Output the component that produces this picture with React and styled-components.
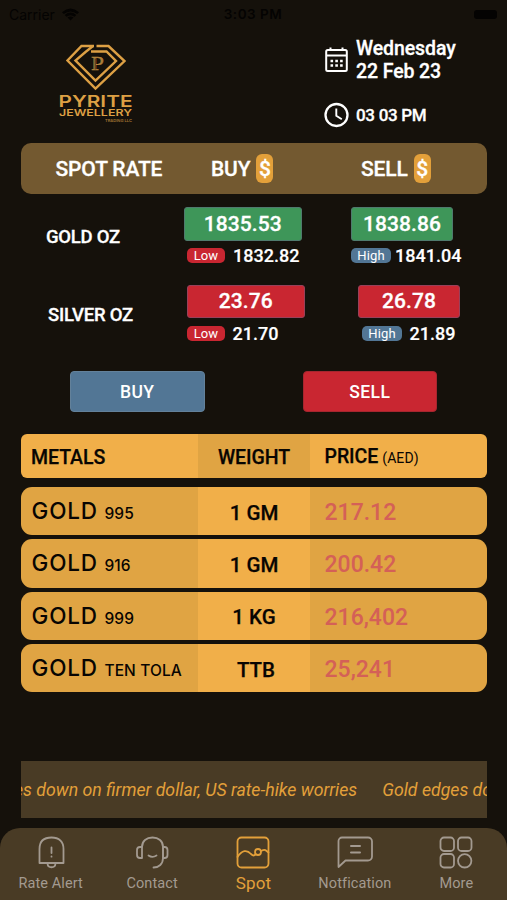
import React from 'react';
import styled, { createGlobalStyle, css } from 'styled-components';

const GlobalStyle = createGlobalStyle`
  :root {
    --background: #15110b;
    --panel: #735930;
    --bar: #493b25;
    --gold: #f1af49;
    --gold-dark: #e0a443;
    --accent: #e3a03a;
    --green: #3e9659;
    --red: #c92631;
    --blue: #527695;
    --muted: #a39a90;
  }

  * {
    box-sizing: border-box;
  }

  body {
    margin: 0;
    background: var(--background);
    font-family: Roboto, sans-serif;
  }

  svg {
    display: block;
  }
`;

const Screen = styled.main`
  width: 507px;
  height: 900px;
  display: flex;
  flex-direction: column;
  overflow: hidden;
  color: #fff;
  background: var(--background);
`;

const StatusBar = styled.div`
  height: 28px;
  padding: 0 10px 0 9px;
  display: grid;
  grid-template-columns: 1fr auto 1fr;
  align-items: center;
  color: #040302;
  font: 400 14px Inter, sans-serif;

  strong {
    font-weight: 600;
    font-size: 13.5px;
    letter-spacing: 0.5px;
  }
`;

const Carrier = styled.div`
  display: flex;
  align-items: center;
  gap: 7px;
`;

const Battery = styled.span`
  width: 23px;
  height: 9px;
  justify-self: end;
  border-radius: 3px;
  background: #040302;
`;

const Header = styled.header`
  height: 115px;
  padding: 9px 0 0 56px;
  display: flex;
`;

const LogoBox = styled.div`
  width: 268px;
  padding-top: 5px;
`;

const DateTime = styled.div`
  display: flex;
  flex-direction: column;
  font-weight: 500;
  -webkit-text-stroke: 0.3px currentColor;
`;

const DateRow = styled.div`
  height: 46px;
  display: flex;
  align-items: center;
  gap: 7px;
  font-size: 19.5px;
  line-height: 23px;
  letter-spacing: -0.1px;
`;

const TimeRow = styled(DateRow)`
  height: 26px;
  margin-top: 19px;
  font-size: 17px;
  letter-spacing: -0.3px;
`;

const SpotHeader = styled.div`
  height: 51px;
  margin: 0 20px 0 21px;
  padding-left: 34.5px;
  display: grid;
  grid-template-columns: 155.5px 150px 1fr;
  align-items: center;
  border-radius: 10px;
  background: var(--panel);
  font-size: 21px;
  font-weight: 500;
  letter-spacing: -0.15px;
  -webkit-text-stroke: 0.3px currentColor;
`;

const SpotTitle = styled.span`
  display: flex;
  align-items: center;
  gap: 6px;
`;

const Currency = styled.span`
  width: 17px;
  height: 29px;
  display: flex;
  align-items: center;
  justify-content: center;
  border-radius: 6px;
  background: var(--accent);
`;

const SpotRow = styled.section`
  height: 77.5px;
  padding-top: 13px;
  padding-left: ${({ $metal }) => ($metal === 'gold' ? '46px' : '48px')};
  display: grid;
  grid-template-columns: ${({ $metal }) =>
    $metal === 'gold' ? '138px 167px 111px' : '139px 171px 101px'};
`;

const MetalName = styled.h2`
  margin: 0;
  padding-top: 20px;
  font-size: 18.5px;
  line-height: 20px;
  font-weight: 500;
  letter-spacing: -0.25px;
  -webkit-text-stroke: 0.3px currentColor;
`;

const Rate = styled.div`
  width: ${({ $wide }) => ($wide ? '117.5px' : '102px')};
  height: 33.5px;
  border-radius: 3px;
  display: flex;
  align-items: center;
  justify-content: center;
  background: ${({ $up }) => ($up ? 'var(--green)' : 'var(--red)')};
  border: 1px solid ${({ $up }) => ($up ? '#4f7a6d' : '#98405a')};
  font-size: 21px;
  font-weight: 500;
  letter-spacing: 0.1px;
  -webkit-text-stroke: 0.3px currentColor;
`;

const Range = styled.div`
  height: 15px;
  margin-top: 7.5px;
  padding-left: ${({ $indent }) => $indent || 0}px;
  display: flex;
  align-items: center;
  gap: ${({ $gap }) => $gap}px;
  font-size: 18px;
  font-weight: 500;
  white-space: nowrap;
  -webkit-text-stroke: 0.2px currentColor;
`;

const RangeBadge = styled.span`
  width: ${({ $high }) => ($high ? 40 : 38)}px;
  height: 15px;
  border-radius: 5px;
  background: ${({ $high }) => ($high ? 'var(--blue)' : 'var(--red)')};
  font-size: 13px;
  line-height: 16px;
  font-weight: 400;
  letter-spacing: 0.1px;
  text-align: center;
  -webkit-text-stroke: 0;
`;

const Actions = styled.div`
  height: 85px;
  padding: 22px 70px 0;
  display: flex;
  justify-content: space-between;
`;

const TradeButton = styled.button`
  width: 134.5px;
  height: 41px;
  padding: 1px 0 0;
  border: 1px solid ${({ $sell }) => ($sell ? '#a5262f' : '#63819a')};
  border-radius: 4px;
  color: #fff;
  background: ${({ $sell }) => ($sell ? 'var(--red)' : 'var(--blue)')};
  font: 500 17.5px Roboto, sans-serif;
  letter-spacing: 0.4px;
`;

const Prices = styled.section`
  padding: 0 20px 0 21px;
  display: flex;
  flex-direction: column;
  gap: 4px;
  color: #080502;
`;

const rowGrid = css`
  display: grid;
  grid-template-columns: 177px 112px 1fr;
  overflow: hidden;
  font-weight: 500;

  > div {
    display: flex;
    align-items: center;
  }
`;

const PriceHeader = styled.div`
  ${rowGrid}
  height: 44px;
  margin-bottom: 5px;
  border-radius: 6px;
  background: var(--gold);
  font-size: 19.5px;
  letter-spacing: -0.05px;
  -webkit-text-stroke: 0.25px currentColor;

  > div:first-child {
    padding-left: 10px;
  }

  > div:nth-child(2) {
    justify-content: center;
    background: var(--gold-dark);
  }

  > div:last-child {
    padding-left: 14.5px;
    align-items: baseline;
    line-height: 45px;
    gap: 4px;
  }

  small {
    font-size: 14px;
    font-weight: 400;
    letter-spacing: 0.1px;
    -webkit-text-stroke: 0;
  }
`;

const PriceRow = styled.div`
  ${rowGrid}
  height: 48.35px;
  border-radius: 11px;
  background: var(--gold-dark);
`;

const Metal = styled.div`
  padding-left: 10.5px;
  font-family: Inter, sans-serif;
  font-size: 22.5px;
  letter-spacing: 0.85px;

  && {
    align-items: baseline;
    line-height: 48px;
    gap: 6.5px;
  }

  small {
    font-size: 15.5px;
    letter-spacing: 0.1px;
  }
`;

const Weight = styled.div`
  justify-content: center;
  padding-left: ${({ $shift }) => $shift || 0}px;
  background: var(--gold);
  font-size: 20.5px;
  -webkit-text-stroke: 0.25px currentColor;
`;

const Price = styled.div`
  padding-left: 14.5px;
  color: #d46057;
  font-size: 23px;
`;

const Ticker = styled.div`
  height: 57px;
  margin: auto 20px 10px 21px;
  display: flex;
  align-items: center;
  overflow: hidden;
  color: var(--accent);
  background: var(--bar);
  font-size: 17.7px;
  font-style: italic;
  white-space: nowrap;

  span {
    margin: 0 25px 0 -7px;
  }

  span + span {
    margin: 0;
  }
`;

const TabBar = styled.nav`
  height: 72px;
  display: grid;
  grid-template-columns: repeat(5, 1fr);
  border-radius: 20px 20px 0 0;
  background: var(--bar);
`;

const Tab = styled.div`
  padding-top: 7px;
  display: flex;
  flex-direction: column;
  align-items: center;
  gap: ${({ $active }) => ($active ? 3 : 4)}px;
  color: ${({ $active }) => ($active ? 'var(--accent)' : 'var(--muted)')};
  font-size: ${({ $active }) => ($active ? 17 : 14.5)}px;
  line-height: 20px;
  letter-spacing: 0.1px;
  white-space: nowrap;
`;

const Logo = () => (
  <svg width="80" height="84" viewBox="56 42 80 84" fill="none" stroke="#dda044">
    <path d="M94 46H81.500L67.500 60.500L95.500 88.500L124.500 61L108.500 46H96.500" strokeWidth="2.400" />
    <path d="M93 46L85.500 52L75.500 60.500L95.500 80.500L116 61L106.500 51.500H91" strokeWidth="2.400" />
    <text x="91" y="70" fill="#a77c3a" stroke="#c18e40" strokeWidth=".3" fontFamily="Liberation Serif, serif" fontSize="19" textLength="13" lengthAdjust="spacingAndGlyphs">
      P
    </text>
    <path d="M95.200 58.500v11" stroke="#15110b" strokeWidth=".7" />
    <g fill="#dda044" fontFamily="Inter, sans-serif" stroke="none">
      <text x="58.500" y="107" fontSize="16.500" fontWeight="600" textLength="74" lengthAdjust="spacingAndGlyphs">
        PYRITE
      </text>
      <text x="59" y="116" fontSize="9" fontWeight="600" textLength="73" lengthAdjust="spacingAndGlyphs">
        JEWELLERY
      </text>
      <text x="105" y="121.500" fontSize="4" fontWeight="600" textLength="27" lengthAdjust="spacingAndGlyphs" opacity=".7">
        TRADING LLC
      </text>
    </g>
  </svg>
);

const WifiIcon = () => (
  <svg width="17" height="13" viewBox="0 0 17 13" fill="currentColor">
    <path d="M0 4.200Q8.500-3 17 4.200L15.200 6Q8.500.8 1.800 6Z" />
    <path d="M2.700 7Q8.500 2.200 14.300 7L12.500 8.700Q8.500 5.600 4.500 8.700Z" />
    <path d="M5.500 9.600Q8.500 7.300 11.500 9.600L8.500 12.500Z" />
  </svg>
);

const CalendarIcon = () => (
  <svg width="25" height="29" viewBox="0 0 25 29" fill="none" stroke="currentColor" strokeWidth="2">
    <rect x="2.200" y="4" width="20.600" height="21" rx="1.500" />
    <path d="M2 9.500h21M6.500 1.500V5M18.500 1.500V5" />
    <path d="M6.500 15h2.600m2.200 0h2.600m2.200 0h2.600M6.500 19.500h2.600m2.200 0h2.600m2.200 0h2.600" strokeWidth="2.500" />
  </svg>
);

const ClockIcon = () => (
  <svg width="25" height="26" viewBox="0 0 25 26" fill="none" stroke="currentColor" strokeWidth="2.300">
    <circle cx="12.500" cy="13" r="11" />
    <path d="M12.300 6.500v7.300l5.500 3.500" strokeWidth="1.900" />
  </svg>
);

const TabIcon = ({ children }) => (
  <svg
    width="36"
    height="35"
    viewBox="0 0 36 35"
    fill="none"
    stroke="currentColor"
    strokeWidth="1.800"
    strokeLinecap="round"
    strokeLinejoin="round">
    {children}
  </svg>
);

const BellIcon = () => (
  <TabIcon>
    <path d="M6.500 28V14C6.500 6.500 11 2.500 18.500 2.500S30.500 6.500 30.500 14v14Z" />
    <path d="M14.500 28.500c.3 5 7.700 5 8 0" />
    <path d="M18.500 12.500v5.500m0 3.500v.2" />
  </TabIcon>
);

const HeadsetIcon = () => (
  <TabIcon>
    <path d="M8 12C8 6 12.500 2.500 18.500 2.500S29 6 29 12v11c0 6-4 9.500-9.500 9.500" />
    <path d="M8 12H6q-3 0-3 3v5q0 3 3 3h2ZM29 12h1.500q3 0 3 3v5q0 3-3 3H29Z" />
    <path d="M14.500 20.500c2.300 1.600 5.500 1.600 8 0" />
  </TabIcon>
);

const SpotIcon = () => (
  <TabIcon>
    <rect x="2.500" y="2.500" width="31" height="30" rx="4" />
    <path d="M2.500 22C7 15 12 14.500 16 19c2 2 3.500 2 4.500 0" />
    <circle cx="23" cy="17" r="3" />
    <path d="M26 16c2-1 3.500-2 5-.5l2.500 2" />
  </TabIcon>
);

const MessageIcon = () => (
  <TabIcon>
    <path d="M5 2.500h26a4 4 0 0 1 4 4v15a4 4 0 0 1-4 4H8.500L1.500 32V6a3.500 3.500 0 0 1 3.500-3.500Z" />
    <path d="M14 11h9M14 17.500h9" strokeWidth="2" />
  </TabIcon>
);

const MoreIcon = () => (
  <TabIcon>
    <rect x="2.500" y="2.500" width="13.500" height="13.500" rx="3.500" />
    <rect x="20" y="2.500" width="13.500" height="13.500" rx="3.500" />
    <rect x="2.500" y="19" width="13.500" height="13.500" rx="3.500" />
    <circle cx="26.700" cy="25.800" r="6.700" />
  </TabIcon>
);

const prices = [
  { purity: '995', weight: '1 GM', price: '217.12' },
  { purity: '916', weight: '1 GM', price: '200.42' },
  { purity: '999', weight: '1 KG', price: '216,402' },
  { purity: 'TEN TOLA', weight: 'TTB', price: '25,241', shift: 4 }
];

const tabs = [
  { label: 'Rate Alert', Icon: BellIcon },
  { label: 'Contact', Icon: HeadsetIcon },
  { label: 'Spot', Icon: SpotIcon, active: true },
  { label: 'Notfication', Icon: MessageIcon },
  { label: 'More', Icon: MoreIcon }
];

const App = () => (
  <Screen>
    <GlobalStyle />
    <StatusBar>
      <Carrier>
        Carrier <WifiIcon />
      </Carrier>
      <strong>3:03 PM</strong>
      <Battery />
    </StatusBar>
    <Header>
      <LogoBox>
        <Logo />
      </LogoBox>
      <DateTime>
        <DateRow>
          <CalendarIcon />
          <div>
            Wednesday
            <br />
            22 Feb 23
          </div>
        </DateRow>
        <TimeRow>
          <ClockIcon />
          03 03 PM
        </TimeRow>
      </DateTime>
    </Header>
    <SpotHeader>
      <span>SPOT RATE</span>
      <SpotTitle>
        BUY <Currency>$</Currency>
      </SpotTitle>
      <SpotTitle>
        SELL <Currency>$</Currency>
      </SpotTitle>
    </SpotHeader>
    <SpotRow $metal="gold">
      <MetalName>GOLD OZ</MetalName>
      <div>
        <Rate $up $wide>
          1835.53
        </Rate>
        <Range $indent={3} $gap={8}>
          <RangeBadge>Low</RangeBadge>
          1832.82
        </Range>
      </div>
      <div>
        <Rate $up>1838.86</Rate>
        <Range $gap={4}>
          <RangeBadge $high>High</RangeBadge>
          1841.04
        </Range>
      </div>
    </SpotRow>
    <SpotRow $metal="silver">
      <MetalName>SILVER OZ</MetalName>
      <div>
        <Rate $wide>23.76</Rate>
        <Range $gap={7.5}>
          <RangeBadge>Low</RangeBadge>
          21.70
        </Range>
      </div>
      <div>
        <Rate>26.78</Rate>
        <Range $indent={4} $gap={7.5}>
          <RangeBadge $high>High</RangeBadge>
          21.89
        </Range>
      </div>
    </SpotRow>
    <Actions>
      <TradeButton>BUY</TradeButton>
      <TradeButton $sell>SELL</TradeButton>
    </Actions>
    <Prices>
      <PriceHeader>
        <div>METALS</div>
        <div>WEIGHT</div>
        <div>
          PRICE <small>(AED)</small>
        </div>
      </PriceHeader>
      {prices.map(({ purity, weight, price, shift }) => (
        <PriceRow key={purity}>
          <Metal>
            GOLD <small>{purity}</small>
          </Metal>
          <Weight $shift={shift}>{weight}</Weight>
          <Price>{price}</Price>
        </PriceRow>
      ))}
    </Prices>
    <Ticker>
      <span>es down on firmer dollar, US rate-hike worries</span>
      <span>Gold edges down</span>
    </Ticker>
    <TabBar>
      {tabs.map(({ label, Icon, active }) => (
        <Tab key={label} $active={active}>
          <Icon />
          {label}
        </Tab>
      ))}
    </TabBar>
  </Screen>
);

export default App;
